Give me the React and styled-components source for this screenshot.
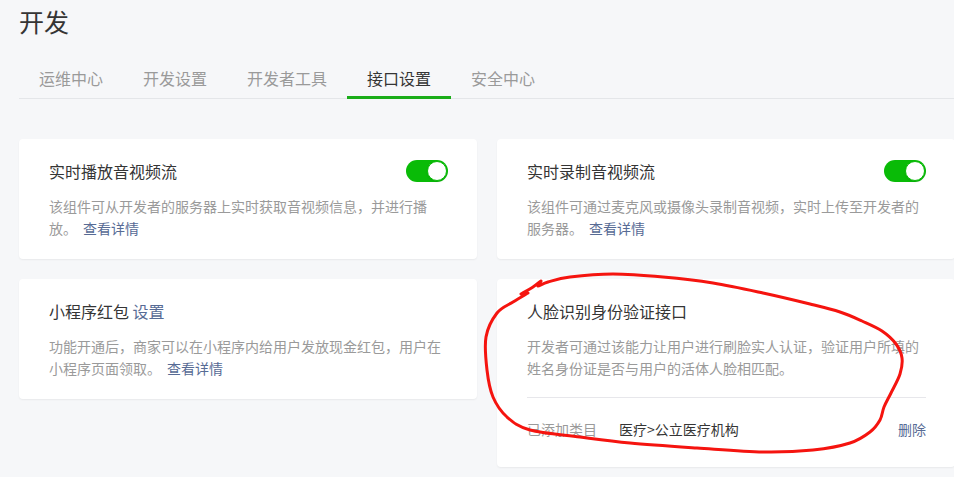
import React from 'react'
import styled, { createGlobalStyle } from 'styled-components'

const GlobalStyle = createGlobalStyle`
  html, body {
    margin: 0;
    padding: 0;
    background: #f6f7f9;
    font-family: "Noto Sans CJK SC", "Noto Sans", "Liberation Sans", sans-serif;
  }
`

const Page = styled.div`
  position: relative;
  width: 954px;
  height: 477px;
  overflow: hidden;
  padding-left: 19px;
  box-sizing: border-box;
`

const Title = styled.h1`
  margin: 0;
  padding-top: 5px;
  font-size: 25px;
  line-height: 32px;
  font-weight: 400;
  color: #353535;
`

const TabBar = styled.div`
  display: flex;
  margin-top: 23px;
  border-bottom: 1px solid #e4e6e9;
`

const Tab = styled.div`
  padding: 0 20px;
  font-size: 16px;
  line-height: 36px;
  color: ${({ active }) => (active ? '#353535' : '#9a9a9a')};
  border-bottom: 3px solid ${({ active }) => (active ? '#1aad19' : 'transparent')};
  margin-bottom: -1px;
  white-space: nowrap;
`

const Grid = styled.div`
  display: grid;
  grid-template-columns: 458px 458px;
  column-gap: 20px;
  row-gap: 20px;
  align-items: start;
  margin-top: 40px;
`

const Card = styled.div`
  background: #fff;
  border-radius: 4px;
  box-shadow: 0 1px 2px rgba(0, 0, 0, 0.06);
  padding: 20px 29px 20px 30px;
`

const CardHead = styled.div`
  display: flex;
  align-items: center;
  justify-content: space-between;
  height: 24px;
`

const CardTitle = styled.div`
  font-size: 16px;
  line-height: 24px;
  color: #353535;
`

const Link = styled.a`
  color: #576b95;
  text-decoration: none;
  margin-left: ${({ gap }) => gap || 0}px;
  cursor: pointer;
`

const Desc = styled.p`
  margin: 12px 0 0;
  font-size: 14px;
  line-height: 22px;
  color: #9a9a9a;
`

const Switch = styled.span`
  position: relative;
  display: inline-block;
  width: 42px;
  height: 22px;
  border-radius: 11px;
  background: #09bb07;

  &::after {
    content: '';
    position: absolute;
    right: 1px;
    top: 1px;
    width: 18px;
    height: 18px;
    border-radius: 50%;
    background: #fff;
    border: 1px solid #09bb07;
    box-shadow: 0 1px 2px rgba(0, 0, 0, 0.1);
  }
`

const Footer = styled.div`
  display: flex;
  align-items: center;
  margin-top: 18px;
  border-top: 1px solid #e7e7eb;
  padding: 21px 0 8px;
  font-size: 14px;
  line-height: 20px;
`

const Label = styled.span`
  width: 92px;
  color: #9a9a9a;
`

const Value = styled.span`
  color: #353535;
`

const Delete = styled.a`
  margin-left: auto;
  color: #576b95;
  cursor: pointer;
`

const Annotation = styled.svg`
  position: absolute;
  left: 0;
  top: 0;
  pointer-events: none;
`

const scribble = [
  [521, 294], [533, 287], [541, 281], [538, 286], [548, 282], [570, 277],
  [613, 274], [663, 277], [713, 283], [763, 293], [810, 304], [840, 312],
  [862, 321], [882, 331], [896, 344], [902, 358], [900, 374], [891, 393],
  [884, 407], [880, 420], [870, 432], [850, 443], [813, 450], [763, 452],
  [697, 448], [630, 443], [580, 437], [530, 430], [507, 417], [493, 397],
  [487, 370], [486, 337], [497, 313], [513, 302], [528, 293],
]

// catmull-rom through the hand-drawn points
const toPath = pts => {
  let d = `M${pts[0][0]},${pts[0][1]}`
  for (let i = 0; i < pts.length - 1; i++) {
    const p0 = pts[i - 1] || pts[i]
    const p1 = pts[i]
    const p2 = pts[i + 1]
    const p3 = pts[i + 2] || p2
    const c1 = [p1[0] + (p2[0] - p0[0]) / 6, p1[1] + (p2[1] - p0[1]) / 6]
    const c2 = [p2[0] - (p3[0] - p1[0]) / 6, p2[1] - (p3[1] - p1[1]) / 6]
    d += ` C${c1[0]},${c1[1]} ${c2[0]},${c2[1]} ${p2[0]},${p2[1]}`
  }
  return d
}

const tabs = ['运维中心', '开发设置', '开发者工具', '接口设置', '安全中心']

const App = () => (
  <Page>
    <GlobalStyle />
    <Title>开发</Title>
    <TabBar>
      {tabs.map(t => (
        <Tab key={t} active={t === '接口设置'}>
          {t}
        </Tab>
      ))}
    </TabBar>
    <Grid>
      <Card>
        <CardHead>
          <CardTitle>实时播放音视频流</CardTitle>
          <Switch />
        </CardHead>
        <Desc>
          该组件可从开发者的服务器上实时获取音视频信息，并进行播放。
          <Link gap={6}>查看详情</Link>
        </Desc>
      </Card>
      <Card>
        <CardHead>
          <CardTitle>实时录制音视频流</CardTitle>
          <Switch />
        </CardHead>
        <Desc>
          该组件可通过麦克风或摄像头录制音视频，实时上传至开发者的服务器。
          <Link gap={6}>查看详情</Link>
        </Desc>
      </Card>
      <Card>
        <CardHead>
          <CardTitle>
            小程序红包 <Link>设置</Link>
          </CardTitle>
        </CardHead>
        <Desc>
          功能开通后，商家可以在小程序内给用户发放现金红包，用户在小程序页面领取。
          <Link gap={6}>查看详情</Link>
        </Desc>
      </Card>
      <Card>
        <CardHead>
          <CardTitle>人脸识别身份验证接口</CardTitle>
        </CardHead>
        <Desc>
          开发者可通过该能力让用户进行刷脸实人认证，验证用户所填的姓名身份证是否与用户的活体人脸相匹配。
        </Desc>
        <Footer>
          <Label>已添加类目</Label>
          <Value>医疗&gt;公立医疗机构</Value>
          <Delete>删除</Delete>
        </Footer>
      </Card>
    </Grid>
    <Annotation width="954" height="477" viewBox="0 0 954 477">
      <path
        d={toPath(scribble)}
        fill="none"
        stroke="#f5140f"
        strokeWidth="3"
        strokeLinecap="round"
        strokeLinejoin="round"
      />
    </Annotation>
  </Page>
)

export default App
